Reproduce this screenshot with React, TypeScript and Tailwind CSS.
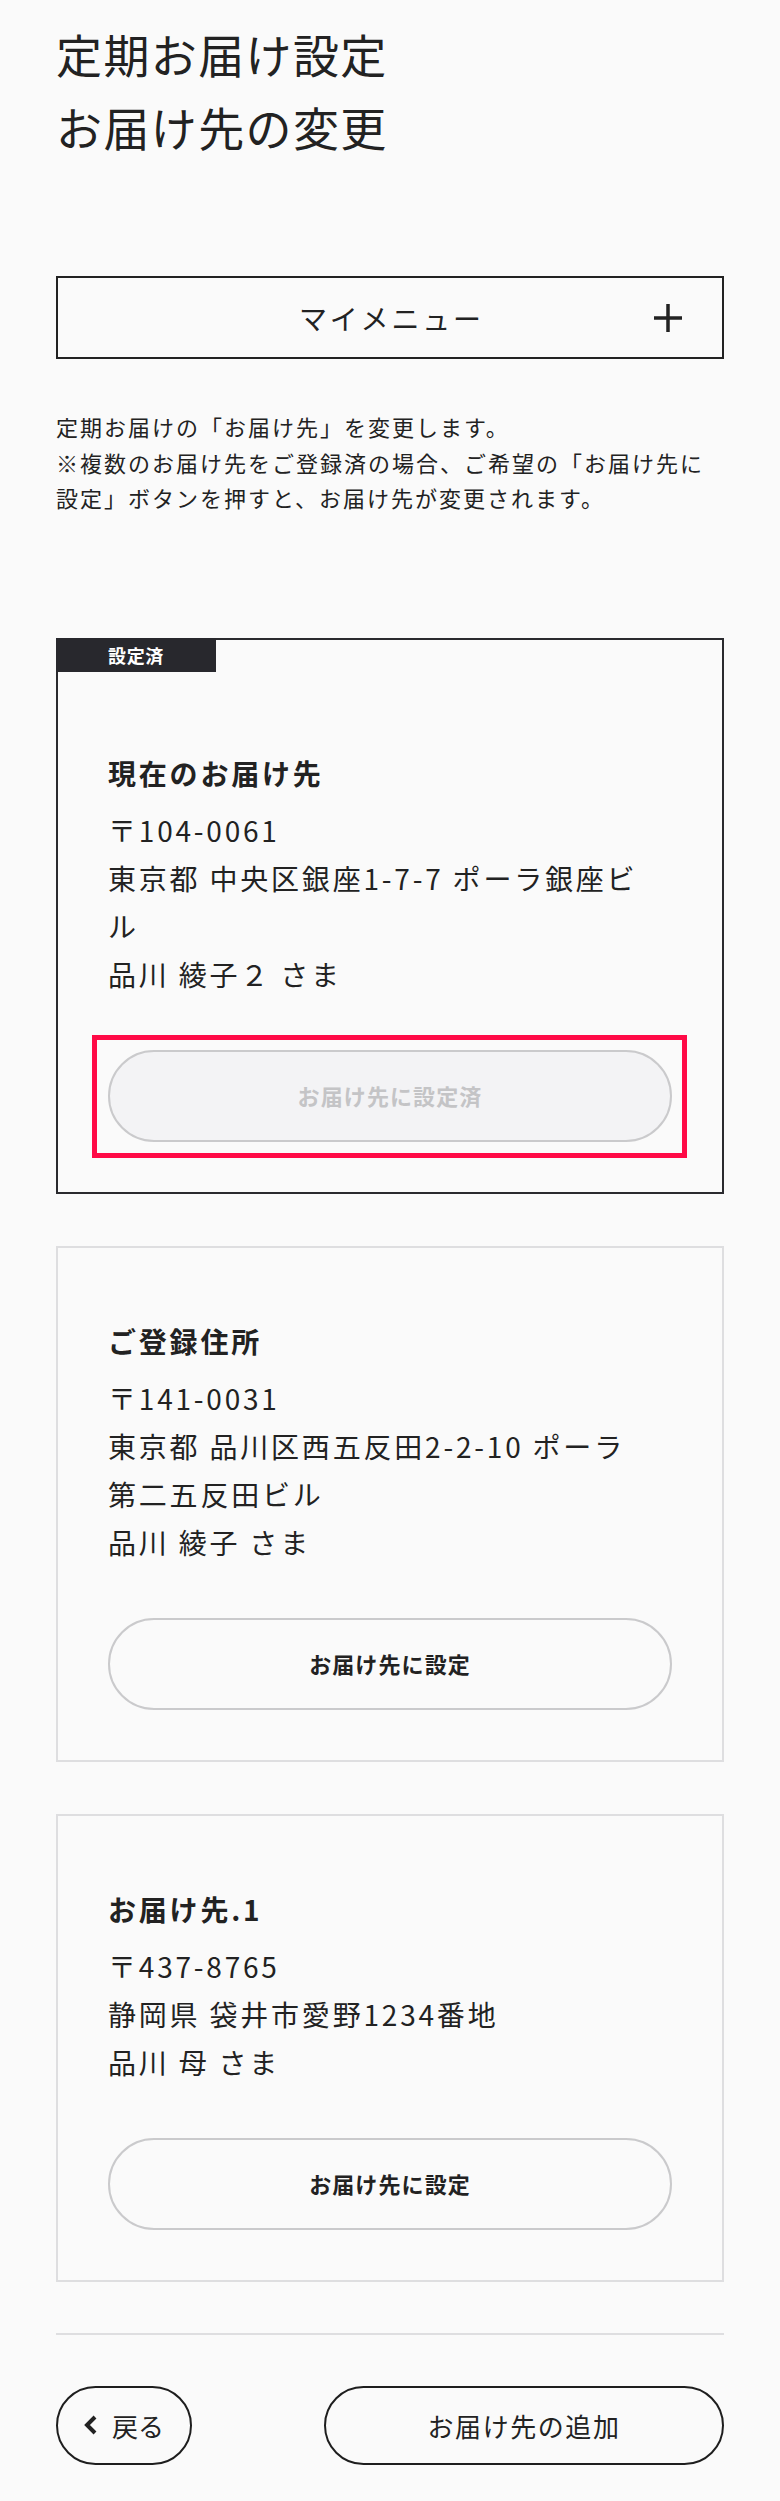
import { ReactNode } from "react";

type Address = {
  label: string;
  lines: string[];
  current?: boolean;
};

const addresses: Address[] = [
  {
    label: "現在のお届け先",
    lines: ["〒104-0061", "東京都 中央区銀座1-7-7 ポーラ銀座ビ", "ル", "品川 綾子２ さま"],
    current: true,
  },
  {
    label: "ご登録住所",
    lines: ["〒141-0031", "東京都 品川区西五反田2-2-10 ポーラ", "第二五反田ビル", "品川 綾子 さま"],
  },
  {
    label: "お届け先.1",
    lines: ["〒437-8765", "静岡県 袋井市愛野1234番地", "品川 母 さま"],
  },
];

function Card({ item }: { item: Address }) {
  const border = item.current ? "border-[#2a2a2e]" : "border-[#dedee0]";
  return (
    <div className={`relative border-2 ${border} px-[50px] pb-[50px] ${item.current ? "pt-[112px]" : "pt-[72px]"}`}>
      {item.current && (
        <div className="absolute -left-[2px] -top-[2px] w-[160px] h-[34px] bg-[#28282d] text-white text-[18px] font-bold tracking-[0.04em] flex items-center justify-center leading-none">
          設定済
        </div>
      )}
      <h3 className="text-[28px] leading-[42px] font-bold tracking-[0.1em] text-[#222]">{item.label}</h3>
      <div className="mt-[12px] text-[28px] leading-[48px] tracking-[0.1em] text-[#222]">
        {item.lines.map((l, i) => (
          <p key={i} className="whitespace-nowrap">{l}</p>
        ))}
      </div>
      <div className="relative mt-[52px]">
        {item.current ? (
          <>
            <button className="w-full h-[92px] rounded-full border-2 border-[#cacacc] bg-[#f3f3f5] text-[22px] font-bold tracking-[0.05em] text-[#c4c4c6]">
              お届け先に設定済
            </button>
            <div className="absolute -left-[16px] -right-[15px] -top-[15px] -bottom-[16px] border-[5px] border-[#ff0a46] pointer-events-none" />
          </>
        ) : (
          <button className="w-full h-[92px] rounded-full border-2 border-[#cacacc] bg-[#fafafa] text-[22px] font-bold tracking-[0.05em] text-[#222]">
            お届け先に設定
          </button>
        )}
      </div>
    </div>
  );
}

function Pill({ children, className }: { children: ReactNode; className: string }) {
  return (
    <button className={`h-[79px] rounded-full border-2 border-[#1e1e1e] flex items-center justify-center text-[26px] text-[#222] ${className}`}>
      {children}
    </button>
  );
}

export default function App() {
  return (
    <div
      className="min-h-[2501px] bg-[#fafafa] px-[56px] pb-[35px] text-[#222]"
      style={{ fontFamily: '"Noto Sans CJK JP", "Noto Sans", sans-serif' }}
    >
      {/* TITLE */}
      <h1 className="pt-[17px] text-[46px] leading-[73px] tracking-[0.03em] font-normal">
        定期お届け設定
        <br />
        お届け先の変更
      </h1>

      {/* MY MENU */}
      <div className="mt-[113px] h-[83px] border-2 border-[#222] relative flex items-center justify-center">
        <span className="text-[28px] tracking-[0.1em] pl-[0.1em]">マイメニュー</span>
        <svg className="absolute right-[40px] top-1/2 -translate-y-1/2" width="28" height="28" viewBox="0 0 28 28">
          <path d="M14 0v28M0 14h28" stroke="#222" strokeWidth="3.5" />
        </svg>
      </div>

      {/* DESCRIPTION */}
      <p className="mt-[50px] text-[22px] leading-[35.5px] tracking-[2px]">
        定期お届けの「お届け先」を変更します。
        <br />
        ※複数のお届け先をご登録済の場合、ご希望の「お届け先に
        <br />
        設定」ボタンを押すと、お届け先が変更されます。
      </p>

      {/* ADDRESS CARDS */}
      <div className="mt-[122px] flex flex-col gap-[52px]">
        {addresses.map(a => (
          <Card key={a.label} item={a} />
        ))}
      </div>

      <div className="mt-[51px] h-[2px] bg-[#dedee0]" />

      {/* FOOTER BUTTONS */}
      <div className="mt-[51px] flex items-center justify-between">
        <Pill className="w-[136px] gap-[14px]">
          <svg width="14" height="20" viewBox="0 0 14 20">
            <path d="M11 2L3 10l8 8" fill="none" stroke="#222" strokeWidth="4" />
          </svg>
          <span>戻る</span>
        </Pill>
        <Pill className="w-[400px] tracking-[0.06em]">お届け先の追加</Pill>
      </div>
    </div>
  );
}
